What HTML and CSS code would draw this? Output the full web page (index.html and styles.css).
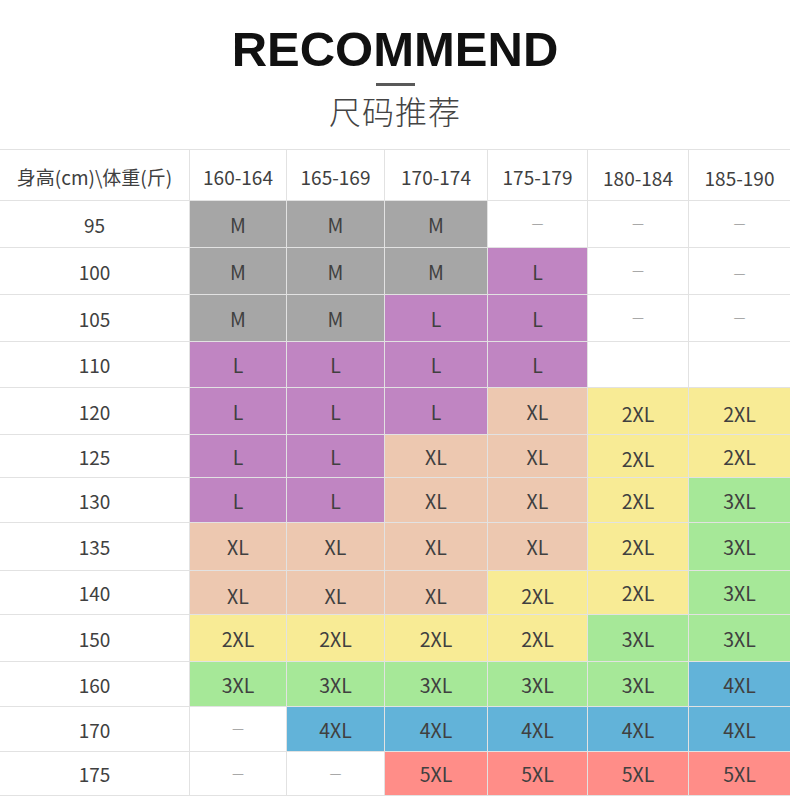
FILE: index.html
```html
<!DOCTYPE html>
<html lang="zh-CN">
<head>
<meta charset="utf-8">
<title>RECOMMEND 尺码推荐</title>
<link rel="stylesheet" href="styles.css">
</head>
<body>
<header class="hero">
  <h1 class="title">RECOMMEND</h1>
  <div class="divider"></div>
  <h2 class="subtitle">尺码推荐</h2>
</header>
<div class="table">
  <div class="cell head r0">身高(cm)\体重(斤)</div>
  <div class="cell head r0">160-164</div>
  <div class="cell head r0">165-169</div>
  <div class="cell head r0">170-174</div>
  <div class="cell head r0">175-179</div>
  <div class="cell head r0 low">180-184</div>
  <div class="cell head r0 low last">185-190</div>

  <div class="cell label">95</div>
  <div class="cell m">M</div><div class="cell m">M</div><div class="cell m">M</div><div class="cell dash">—</div><div class="cell dash">—</div><div class="cell dash last">—</div>

  <div class="cell label">100</div>
  <div class="cell m">M</div><div class="cell m">M</div><div class="cell m">M</div><div class="cell l">L</div><div class="cell dash">—</div><div class="cell dash low last">—</div>

  <div class="cell label">105</div>
  <div class="cell m">M</div><div class="cell m">M</div><div class="cell l">L</div><div class="cell l">L</div><div class="cell dash">—</div><div class="cell dash last">—</div>

  <div class="cell label">110</div>
  <div class="cell l">L</div><div class="cell l">L</div><div class="cell l">L</div><div class="cell l">L</div><div class="cell"></div><div class="cell last"></div>

  <div class="cell label">120</div>
  <div class="cell l">L</div><div class="cell l">L</div><div class="cell l">L</div><div class="cell xl">XL</div><div class="cell xxl low">2XL</div><div class="cell xxl low last">2XL</div>

  <div class="cell label">125</div>
  <div class="cell l">L</div><div class="cell l">L</div><div class="cell xl">XL</div><div class="cell xl">XL</div><div class="cell xxl low">2XL</div><div class="cell xxl last">2XL</div>

  <div class="cell label">130</div>
  <div class="cell l">L</div><div class="cell l">L</div><div class="cell xl">XL</div><div class="cell xl">XL</div><div class="cell xxl">2XL</div><div class="cell x3 last">3XL</div>

  <div class="cell label">135</div>
  <div class="cell xl">XL</div><div class="cell xl">XL</div><div class="cell xl">XL</div><div class="cell xl">XL</div><div class="cell xxl">2XL</div><div class="cell x3 last">3XL</div>

  <div class="cell label">140</div>
  <div class="cell xl low">XL</div><div class="cell xl low">XL</div><div class="cell xl low">XL</div><div class="cell xxl low">2XL</div><div class="cell xxl">2XL</div><div class="cell x3 last">3XL</div>

  <div class="cell label">150</div>
  <div class="cell xxl">2XL</div><div class="cell xxl">2XL</div><div class="cell xxl">2XL</div><div class="cell xxl">2XL</div><div class="cell x3">3XL</div><div class="cell x3 last">3XL</div>

  <div class="cell label">160</div>
  <div class="cell x3">3XL</div><div class="cell x3">3XL</div><div class="cell x3">3XL</div><div class="cell x3">3XL</div><div class="cell x3">3XL</div><div class="cell x4 last">4XL</div>

  <div class="cell label">170</div>
  <div class="cell dash">—</div><div class="cell x4">4XL</div><div class="cell x4">4XL</div><div class="cell x4">4XL</div><div class="cell x4">4XL</div><div class="cell x4 last">4XL</div>

  <div class="cell label">175</div>
  <div class="cell dash">—</div><div class="cell dash">—</div><div class="cell x5">5XL</div><div class="cell x5">5XL</div><div class="cell x5">5XL</div><div class="cell x5 last">5XL</div>
</div>
</body>
</html>
```

FILE: styles.css
```css
html, body {
  margin: 0;
  padding: 0;
  background: #ffffff;
}

body {
  width: 790px;
  font-family: "Noto Sans CJK SC", "Noto Sans", sans-serif;
  color: #444444;
}

.hero {
  height: 149px;
  box-sizing: border-box;
  padding-top: 25px;
  display: flex;
  flex-direction: column;
  align-items: center;
}

.title {
  margin: 0;
  font-family: "Liberation Sans", Arial, sans-serif;
  font-weight: 700;
  font-size: 49px;
  line-height: 49px;
  color: #111111;
}

.divider {
  width: 39px;
  height: 3px;
  margin-top: 9px;
  background: #595959;
}

.subtitle {
  margin: 8px 0 0;
  font-family: "Noto Sans CJK SC", sans-serif;
  font-weight: 300;
  font-size: 32px;
  line-height: 32px;
  color: #444444;
  letter-spacing: 1px;
}

.table {
  display: grid;
  grid-template-columns: 190px 97px 98px 103px 100px 101px 101px;
  grid-template-rows: 51px 47px 47px 47px 46px 47px 43px 45px 48px 44px 47px 45px 45px 44px;
  border-top: 1px solid #e2e2e2;
}

.cell {
  box-sizing: border-box;
  border-right: 1px solid #e2e2e2;
  border-bottom: 1px solid #e2e2e2;
  display: flex;
  align-items: center;
  justify-content: center;
  font-size: 19.5px;
  color: #404040;
  background: #ffffff;
}

.cell.last {
  border-right: none;
}

.head {
  padding-top: 2px;
  font-size: 19px;
}

.head.low {
  padding-top: 4px;
}

.label {
  font-size: 19px;
}

.low {
  padding-top: 5px;
}

.dash {
  font-family: "DejaVu Sans", sans-serif;
  font-weight: 300;
  color: #666666;
  font-size: 12px;
}

.m { background: #a6a6a6; }
.l { background: #c085c2; }
.xl { background: #edc8b0; }
.xxl { background: #f8eb95; }
.x3 { background: #a6e898; }
.x4 { background: #62b3d9; }
.x5 { background: #ff8d88; }
```
